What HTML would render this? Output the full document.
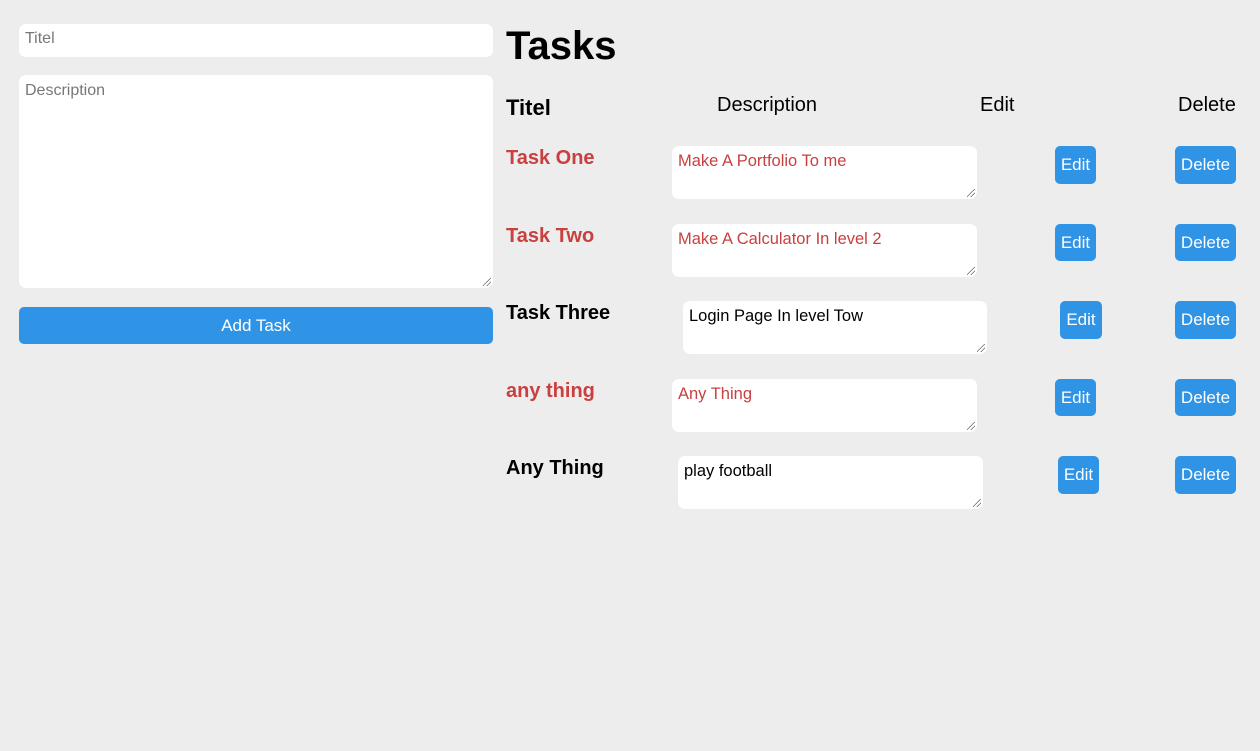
<!DOCTYPE html>
<html><head><meta charset="utf-8"><style>
body{margin:0;width:1260px;height:751px;background:#ededed;font-family:"Liberation Sans",Arial,sans-serif;position:relative;overflow:hidden}
.a{position:absolute}
.box{background:#fff;border-radius:7px;box-sizing:border-box}
.ph{color:#777;font-size:16px}
.btn{background:#2f93e6;color:#fff;border-radius:5px;font-size:17px;display:flex;align-items:center;justify-content:center}
.t{font-size:20px;font-weight:bold}
.red{color:#c8403f}
.ta{font-size:16.5px;padding:6px 6px}
.grip{position:absolute;right:2px;bottom:2px;width:8px;height:8px;background:linear-gradient(135deg,transparent 45%,#666 45%,#666 52%,transparent 52%,transparent 70%,#666 70%,#666 77%,transparent 77%)}
.h{font-size:20px}
</style></head><body>
<div class="a box ph" style="left:19px;top:24px;width:474px;height:33px;padding:6px 6px">Titel</div>
<div class="a box ph" style="left:19px;top:75px;width:474px;height:213px;padding:7px 6px">Description<div class="grip"></div></div>
<div class="a btn" style="left:19px;top:307px;width:474px;height:37px">Add Task</div>

<div class="a" style="left:506px;top:24px;font-size:40px;font-weight:bold">Tasks</div>
<div class="a" style="left:506px;top:95px;font-size:22px;font-weight:bold">Titel</div>
<div class="a h" style="left:717px;top:94px">Description</div>
<div class="a h" style="left:980px;top:94px">Edit</div>
<div class="a h" style="left:1178px;top:94px">Delete</div>

<div class="a t red" style="left:506px;top:147px">Task One</div>
<div class="a box ta red" style="left:672px;top:146px;width:305px;height:53px">Make A Portfolio To me<div class="grip"></div></div>
<div class="a btn" style="left:1055px;top:146px;width:41px;height:38px">Edit</div>
<div class="a btn" style="left:1175px;top:146px;width:61px;height:38px">Delete</div>

<div class="a t red" style="left:506px;top:225px">Task Two</div>
<div class="a box ta red" style="left:672px;top:224px;width:305px;height:53px">Make A Calculator In level 2<div class="grip"></div></div>
<div class="a btn" style="left:1055px;top:224px;width:41px;height:37px">Edit</div>
<div class="a btn" style="left:1175px;top:224px;width:61px;height:37px">Delete</div>

<div class="a t" style="left:506px;top:302px">Task Three</div>
<div class="a box ta" style="left:683px;top:301px;width:304px;height:53px">Login Page In level Tow<div class="grip"></div></div>
<div class="a btn" style="left:1060px;top:301px;width:42px;height:38px">Edit</div>
<div class="a btn" style="left:1175px;top:301px;width:61px;height:38px">Delete</div>

<div class="a t red" style="left:506px;top:380px">any thing</div>
<div class="a box ta red" style="left:672px;top:379px;width:305px;height:53px">Any Thing<div class="grip"></div></div>
<div class="a btn" style="left:1055px;top:379px;width:41px;height:37px">Edit</div>
<div class="a btn" style="left:1175px;top:379px;width:61px;height:37px">Delete</div>

<div class="a t" style="left:506px;top:457px">Any Thing</div>
<div class="a box ta" style="left:678px;top:456px;width:305px;height:53px">play football<div class="grip"></div></div>
<div class="a btn" style="left:1058px;top:456px;width:41px;height:38px">Edit</div>
<div class="a btn" style="left:1175px;top:456px;width:61px;height:38px">Delete</div>
</body></html>
